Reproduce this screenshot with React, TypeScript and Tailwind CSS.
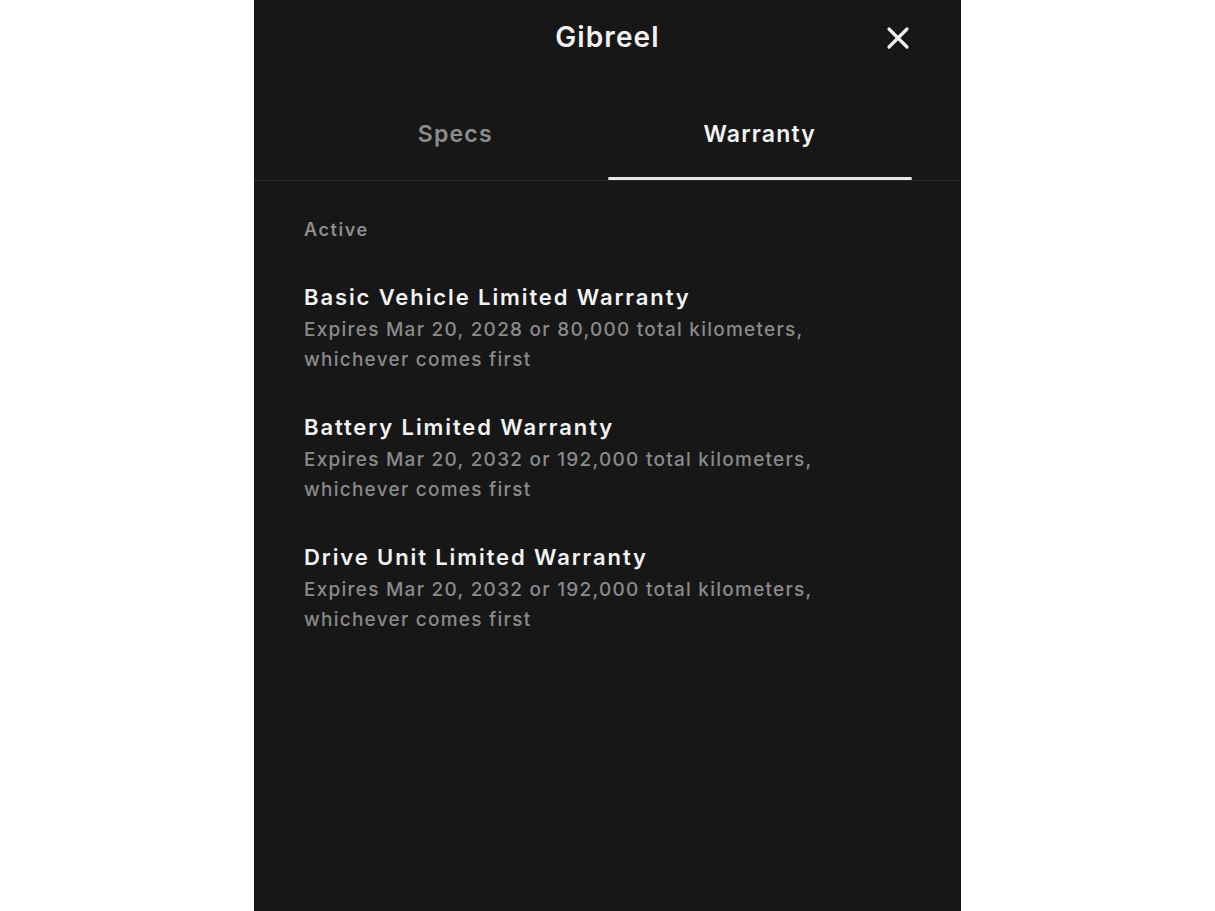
import React from "react";

const items = [
  {
    title: "Basic Vehicle Limited Warranty",
    desc: ["Expires Mar 20, 2028 or 80,000 total kilometers,", "whichever comes first"],
  },
  {
    title: "Battery Limited Warranty",
    desc: ["Expires Mar 20, 2032 or 192,000 total kilometers,", "whichever comes first"],
  },
  {
    title: "Drive Unit Limited Warranty",
    desc: ["Expires Mar 20, 2032 or 192,000 total kilometers,", "whichever comes first"],
  },
];

export default function App() {
  return (
    <div className="w-[1215px] h-[911px] bg-white overflow-hidden" style={{ fontFamily: "Inter, 'Noto Sans', sans-serif" }}>
      <div className="ml-[254px] w-[707px] h-[911px] bg-[#171717] flex flex-col">
        <div className="relative h-[74px] flex items-center justify-center">
          <div className="text-[28px] font-semibold text-[#f2f2f2] leading-[34px] tracking-[1.1px]">Gibreel</div>
          <svg className="absolute right-[51px] top-[26px]" width="24" height="24" viewBox="0 0 24 24">
            <path d="M3 3 L21 21 M21 3 L3 21" stroke="#f2f2f2" strokeWidth="3.2" strokeLinecap="round" />
          </svg>
        </div>
        <div className="border-b border-[#2a2a2a]">
          <div className="mx-[49px] flex">
            <div className="flex-1 flex flex-col items-center">
              <div className="pt-[45px] text-[23px] font-semibold leading-[30px] tracking-[1.2px] text-[#8c8c8c]">Specs</div>
              <div className="mt-[28px] h-[3px] w-full" />
            </div>
            <div className="flex-1 flex flex-col items-center">
              <div className="pt-[45px] text-[23px] font-semibold leading-[30px] tracking-[1.2px] text-[#f2f2f2]">Warranty</div>
              <div className="mt-[28px] h-[3px] w-full bg-[#e6e6e6] rounded-full" />
            </div>
          </div>
        </div>
        <div className="px-[50px] pt-[37px]">
          <div className="text-[18px] font-semibold leading-[24px] tracking-[1.6px] text-[#8e8e8e]">Active</div>
          <div className="mt-[40px] flex flex-col gap-[37px]">
            {items.map((it) => (
              <div key={it.title}>
                <div className="text-[22px] font-semibold leading-[30px] tracking-[1.9px] text-[#f2f2f2] mb-[3px]">{it.title}</div>
                {it.desc.map((d) => (
                  <div key={d} className="text-[19px] font-medium leading-[30px] tracking-[1.25px] text-[#8a8a8a]">{d}</div>
                ))}
              </div>
            ))}
          </div>
        </div>
      </div>
    </div>
  );
}
